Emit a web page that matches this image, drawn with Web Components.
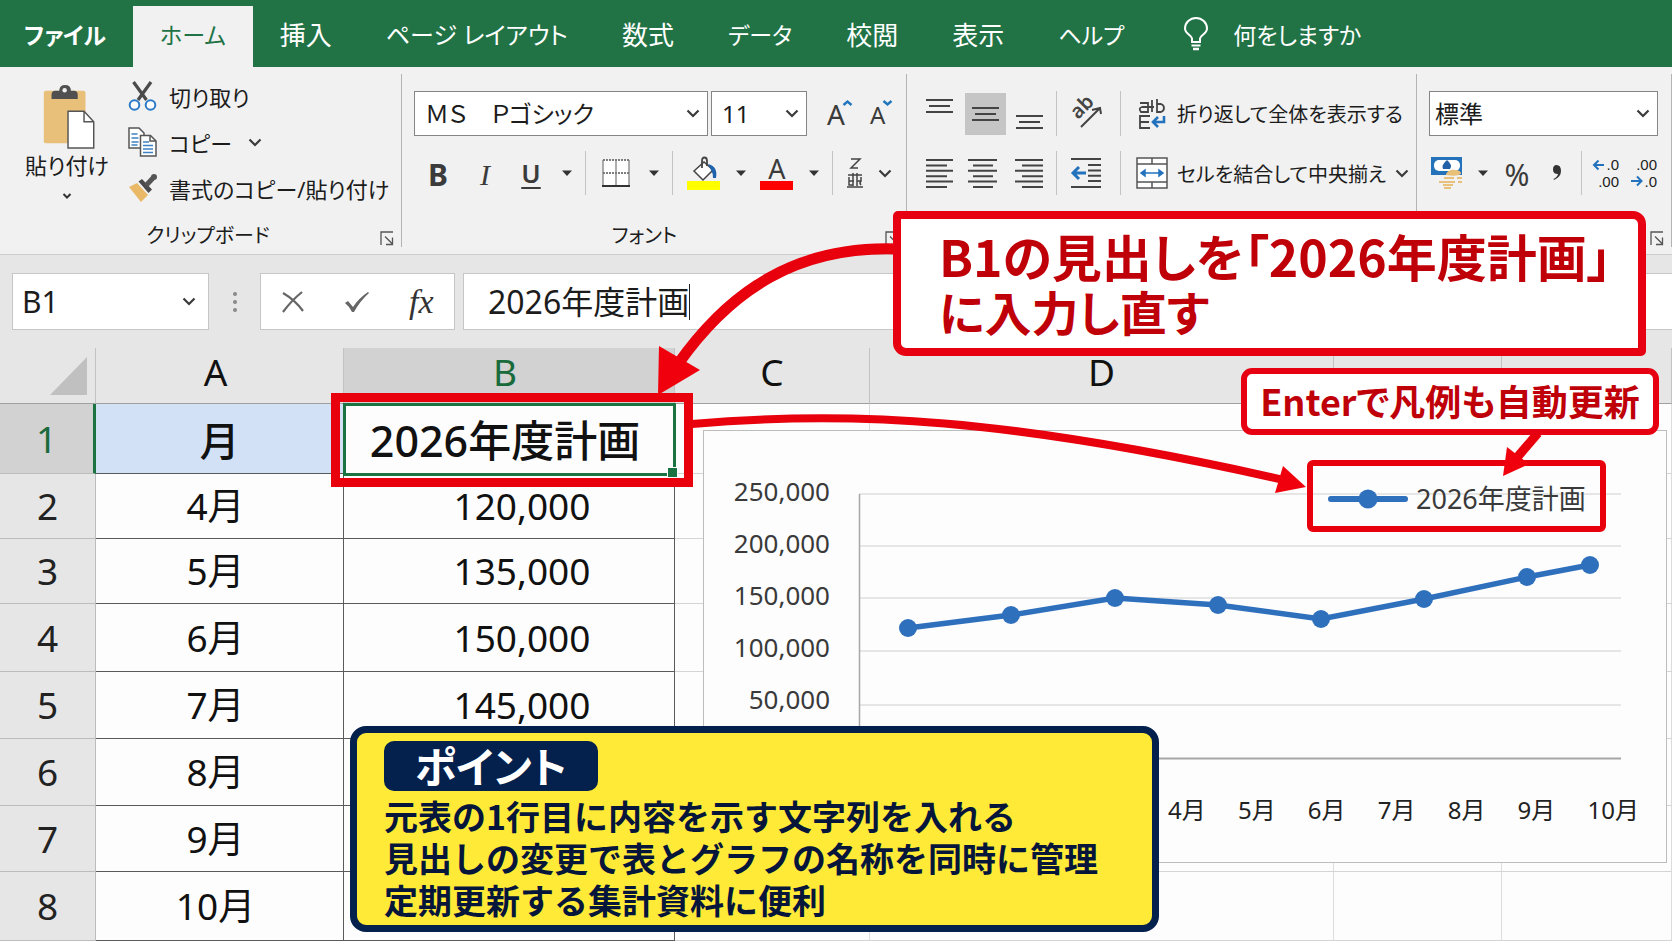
<!DOCTYPE html>
<html lang="ja">
<head>
<meta charset="utf-8">
<title>2026年度計画</title>
<style>
  html, body { margin: 0; height: 100%; }
  body {
    background: #e6e6e6;
    color: #1c1c1c;
    font-family: "Noto Sans", "Noto Sans CJK JP", sans-serif;
    font-feature-settings: "palt";
    overflow: hidden;
  }
</style>
</head>
<body>
<excel-app></excel-app>

<script>
const BASE = `
  *, *::before, *::after { box-sizing: border-box; }
  button, input, select { font: inherit; font-feature-settings: inherit; color: inherit; margin: 0; }
  button { border: 0; background: none; padding: 0; display: flex; align-items: center; justify-content: center; flex: none; white-space: nowrap; }
  svg { display: block; flex: none; overflow: visible; }
`;

function define(name, css, html, setup) {
  const template = document.createElement('template');
  template.innerHTML = `<style>${BASE}${css}</style>${html}`;
  customElements.define(name, class extends HTMLElement {
    constructor() {
      super();
      this.attachShadow({ mode: 'open' }).append(template.content.cloneNode(true));
    }
    connectedCallback() { if (setup) setup(this, this.shadowRoot); }
  });
}

/* ---------- small shared parts ---------- */
define('chevron-icon', `:host { display: block; flex: none; }`,
  `<svg width="14" height="9" viewBox="0 0 14 9" fill="none" stroke="#3a3a3a" stroke-width="2.2"><path d="M1.5 1.5 7 7l5.500-5.500"/></svg>`);

define('drop-arrow', `:host { display: block; flex: none; }
  button { width: 100%; height: 44px; }`,
  `<button type="button" aria-label="その他のオプション"><svg width="10" height="6" viewBox="0 0 10 6"><path d="M0 0.500h10L5 6z" fill="#333"/></svg></button>`);

define('bar-separator', `:host { display: flex; justify-content: center; align-self: stretch; flex: none; }
  i { width: 1px; background: #c4c4c4; }`, `<i></i>`);

define('select-box', `
  :host { display: block; position: relative; height: 45px; }
  select { appearance: none; width: 100%; height: 100%; border: 1px solid #858585; border-radius: 0; background: #fff; padding: 0 30px 0 10px; font-size: 24px; color: #1c1c1c; }
  :host([compact]) select { padding-left: 5px; }
  chevron-icon { position: absolute; right: 8px; top: 18px; pointer-events: none; }`,
  `<select></select><chevron-icon></chevron-icon>`,
  (host, root) => {
    const s = root.querySelector('select');
    s.setAttribute('aria-label', host.getAttribute('label'));
    s.innerHTML = `<option>${host.getAttribute('value')}</option>`;
  });

/* ---------- tab bar ---------- */
define('ribbon-tabs', `
  :host { display: flex; height: 67px; padding: 6px 0 0; background: #217346; color: #fff; font-size: 23px; overflow: hidden; }
  nav { display: flex; flex: none; }
  a { display: flex; align-items: center; padding: 0 27px 6px; color: inherit; text-decoration: none; white-space: nowrap; }
  a:first-child { font-weight: 600; padding-left: 24px; }
  a.kanji { font-size: 26px; }
  a.long { font-size: 24px; }
  a[aria-current] { background: #f1f1f1; color: #217346; }
  button { margin-left: 32px; gap: 24px; padding-bottom: 6px; }`,
  `<nav>
    <a href="#file">ファイル</a><a href="#home" aria-current="page">ホーム</a><a class="kanji" href="#insert">挿入</a>
    <a class="long" href="#layout">ページ レイアウト</a><a class="kanji" href="#formula">数式</a><a href="#data">データ</a>
    <a class="kanji" href="#review">校閲</a><a class="kanji" href="#view">表示</a><a href="#help">ヘルプ</a>
  </nav>
  <button type="button">
    <svg width="26" height="34" viewBox="0 0 26 34" fill="none" stroke="#fff" stroke-width="2">
      <path d="M9 25v-3.500C8.500 18 2 17 2 11.500a11 10.500 0 0 1 22 0C24 17 17.500 18 17 21.500V25z"/><path d="M8.500 28.500h9"/><path d="M10 32h6" stroke-width="2.500"/></svg>
    何をしますか</button>`);

/* ---------- ribbon ---------- */
define('ribbon-group', `
  :host { display: flex; flex-direction: column; position: relative; min-width: 0; padding: 24px 12px 0; height: 187px; }
  :host::after { content: ""; position: absolute; right: 0; top: 7px; bottom: 7px; width: 1px; background: #b4b4b4; }
  .body { flex: 1; min-height: 0; }
  footer { display: flex; align-items: center; height: 40px; font-size: 20px; }
  span { flex: 1; text-align: center; }
  footer button { margin: 8px -4px 0 0; }
  :host([lead]) span { padding-left: 24px; }
  :host(:not([lead])) span { padding-right: 10px; }`,
  `<div class="body"><slot></slot></div>
   <footer><span></span><button type="button" aria-label="詳細設定"><svg width="14" height="15" viewBox="0 0 14 15" fill="none" stroke="#555" stroke-width="1.300"><path d="M1 14V1h12M5 5.500l7 7M12.500 6.500V13.500H6"/></svg></button></footer>`,
  (host, root) => { root.querySelector('span').textContent = host.getAttribute('label'); });

define('clipboard-tools', `
  :host { display: flex; font-size: 22px; margin-top: -8px; }
  .paste { flex-direction: column; width: 110px; line-height: 32px; justify-content: flex-start; align-self: flex-start; }
  .paste svg.clip { margin: 2px 0 0 4px; }
  .paste svg.down { margin-top: 12px; }
  .list { display: flex; flex-direction: column; margin-left: 6px; margin-top: -10px; }
  .list button { justify-content: flex-start; height: 46px; gap: 12px; }
  .list chevron-icon { margin-left: 4px; }`,
  `<button class="paste" type="button">
    <svg class="clip" width="54" height="64" viewBox="0 0 54 66">
      <rect x="1" y="6" width="43" height="54" rx="2" fill="#e9c07a"/>
      <path d="M9 14.500V10q0-4 4-4h4q0-6 6-6t6 6h3q4 0 4 4v4.500z" fill="#505050"/><circle cx="22.500" cy="5.500" r="2.300" fill="#f1f1f1"/>
      <path d="M26 27h16.500L52.500 38v27H26z" fill="#fff" stroke="#555" stroke-width="1.500"/><path d="M42.500 27v11h10" fill="none" stroke="#555" stroke-width="1.500"/></svg>
    貼り付け
    <svg class="down" width="8" height="6" viewBox="0 0 8 6" fill="none" stroke="#333" stroke-width="2"><path d="M.5 1 4 4.500 7.500 1"/></svg>
  </button>
  <div class="list">
    <button type="button"><svg width="29" height="30" viewBox="0 0 29 30">
      <path d="M5.500 1 18.500 19M23 1 10 19" stroke="#4a4a4a" stroke-width="3.200"/><g fill="#fff" stroke="#2b7bc8" stroke-width="2"><circle cx="6.500" cy="24" r="4.800"/><circle cx="22.500" cy="24" r="4.800"/></g></svg>切り取り</button>
    <button type="button"><svg width="29" height="30" viewBox="0 0 29 30" fill="#fff" stroke="#555" stroke-width="1.500">
      <path d="M1 1h10l5 5v15H1z"/><path d="M3.500 7h6M3.500 11h7M3.500 15h7M3.500 18h6" stroke="#3c82c4"/><path d="M12.500 8.500h10L28 14v15H12.500z"/><path d="M22 8.500V14h6" fill="none"/><path d="M15 15h6M15 18.500h10M15 22h10M15 25.500h10" stroke="#3c82c4"/></svg>コピー<chevron-icon></chevron-icon></button>
    <button type="button"><svg width="29" height="30" viewBox="0 0 29 30">
      <path d="M1 14 9 10 20 22 13 29z" fill="#e9b968"/><path d="M10.500 8.500 14 6 24 16.500 20.500 20z" fill="#4a4a4a"/><path d="M18 12.500 25 5" stroke="#555" stroke-width="5"/><circle cx="26" cy="4" r="3" fill="#555"/></svg>書式のコピー/貼り付け</button>
  </div>`);

define('font-tools', `
  :host { display: block; }
  .row { display: flex; align-items: center; height: 45px; }
  .row + .row { margin-top: 15px; height: 44px; }
  .row button { height: 44px; color: #3b3b3b; }
  .family { width: 294px; margin-right: 3px; }
  .size { width: 96px; }
  .w30 { width: 30px; } .w46 { width: 46px; } .w48 { width: 48px; } .w50 { width: 50px; } .w52 { width: 52px; }
  drop-arrow { width: 26px; } drop-arrow.s { width: 21px; }
  bar-separator { width: 11px; } bar-separator.l { width: 16px; }
  .b { font-size: 30px; font-weight: 700; padding-top: 3px; } .i { font: italic 400 30px "Liberation Serif", serif; padding-top: 3px; } .u { font-size: 26px; font-weight: 600; text-decoration: underline; text-underline-offset: 4px; text-decoration-thickness: 2px; }
  .big { font-size: 28px; margin-left: 20px; } .small { font-size: 24px; margin-left: 18px; padding-top: 2px; }
  .big svg, .small svg { align-self: flex-start; margin: 8px 0 0 -2px; } .small svg { margin-top: 6px; }
  text { font-family: "Noto Sans", "Noto Sans CJK JP", sans-serif; }`,
  `<div class="row">
    <select-box class="family" label="フォント" value="ＭＳ　Ｐゴシック"></select-box>
    <select-box class="size" label="フォント サイズ" value="11"></select-box>
    <button class="big" type="button">A<svg width="9" height="6" viewBox="0 0 9 6" fill="none" stroke="#2076bd" stroke-width="2.400"><path d="M.5 5 4.500 1.500 8.500 5"/></svg></button>
    <button class="small" type="button">A<svg width="9" height="6" viewBox="0 0 9 6" fill="none" stroke="#2076bd" stroke-width="2.400"><path d="M.5 1 4.500 4.500 8.500 1"/></svg></button>
  </div>
  <div class="row">
    <button class="b w48" type="button">B</button><button class="i w46" type="button">I</button><button class="u w46" type="button">U</button><drop-arrow></drop-arrow>
    <bar-separator></bar-separator>
    <button class="w50" type="button" aria-label="罫線"><svg width="28" height="28" viewBox="0 0 28 28" fill="none"><path d="M1 1h26v26H1z" fill="#fff"/><path d="M1 1h26M1 14h26" stroke="#555" stroke-width="1.400" stroke-dasharray="2 1"/><path d="M1 1v26M14 1v26M27 1v26" stroke="#777" stroke-width="1.200"/><path d="M0 27h28" stroke="#333" stroke-width="2"/></svg></button><drop-arrow></drop-arrow>
    <bar-separator></bar-separator>
    <button class="w52" type="button" aria-label="塗りつぶしの色"><svg width="34" height="34" viewBox="0 0 34 34"><path d="M7 15 17 6 26 14 16 24z" fill="#fff" stroke="#444" stroke-width="1.500"/><path d="M15 12V5q0-3.500 2.500-3.500T20 5v5" fill="none" stroke="#444" stroke-width="1.800"/><path d="M21 8q10 2 8 14l-3 0q0-5-2-8z" fill="#1f63ad"/><rect y="25" width="33" height="9" fill="#ff0"/></svg></button><drop-arrow class="s"></drop-arrow>
    <button class="w52" type="button" aria-label="フォントの色"><svg width="34" height="34" viewBox="0 0 34 34"><text x="17" y="23" text-anchor="middle" font-size="27" fill="#3b3b3b">A</text><rect y="25" width="33" height="9" fill="#f00"/></svg></button><drop-arrow class="s"></drop-arrow>
    <bar-separator class="l"></bar-separator>
    <button class="w30" type="button" aria-label="ふりがな"><svg width="18" height="32" viewBox="0 0 18 32" fill="none" stroke="#444" stroke-width="1.500"><path d="M5 2h9L7 9l-2 2h7"/><path d="M2 18h14M7 16v13M11 16v13M3 20v4h5M15 20v4h-4M3 24v4h4M15 28q-2-2 0-4M1 30h16"/></svg></button>
    <button class="w30" type="button" aria-label="ふりがなの表示"><chevron-icon></chevron-icon></button>
  </div>`);

define('align-tools', `
  :host { display: block; font-size: 20px; }
  .row { display: flex; align-items: center; height: 45px; }
  .row + .row { margin-top: 15px; height: 44px; }
  .row button { height: 42px; }
  .w41 { width: 41px; } .w46 { width: 46px; } .w50 { width: 50px; }
  .on { background: #c5c5c5; margin-left: 5px; }
  .top svg { margin-bottom: 16px; } .bottom svg { margin-top: 16px; }
  bar-separator { width: 9px; } bar-separator.l { width: 18px; }
  .text { gap: 9px; padding-left: 7px; }
  text { font-family: "Noto Sans", sans-serif; }`,
  `<div class="row">
    <button class="w41 top" type="button" aria-label="上揃え"><svg width="27" height="14" viewBox="0 0 27 14" stroke="#444" stroke-width="2"><path d="M0 1h27M3 7h21M0 13h27"/></svg></button>
    <button class="w41 on" type="button" aria-label="上下中央揃え" aria-pressed="true"><svg width="27" height="14" viewBox="0 0 27 14" stroke="#444" stroke-width="2"><path d="M0 1h27M3 7h21M0 13h27"/></svg></button>
    <button class="w46 bottom" type="button" aria-label="下揃え"><svg width="27" height="14" viewBox="0 0 27 14" stroke="#444" stroke-width="2"><path d="M0 1h27M3 7h21M0 13h27"/></svg></button>
    <bar-separator></bar-separator>
    <button class="w50" type="button" aria-label="方向"><svg width="34" height="32" viewBox="0 0 34 32"><text transform="translate(9 22) rotate(-45)" font-size="20" fill="#444" font-weight="600">ab</text><path d="M12 29 30 11M23 12l8-2 1 6" fill="none" stroke="#444" stroke-width="2"/></svg></button>
    <bar-separator class="l"></bar-separator>
    <button class="text" type="button"><svg width="32" height="32" viewBox="0 0 32 32" fill="none" stroke="#444" stroke-width="1.800"><path d="M4 5h8v9H5q-3-4 1-5h12M16 2v12M21 1v13h4q3-1 3-4t-3-4h-4M14 18H4v12h10M4 24h9"/><path d="M28 18v6H18M22 19l-5 5 5 5" stroke="#2272bd" stroke-width="2.600"/></svg>折り返して全体を表示する</button>
  </div>
  <div class="row">
    <button class="w41" type="button" aria-label="左揃え"><svg width="28" height="29" viewBox="0 0 28 29" stroke="#444" stroke-width="2"><path d="M0 1h27M0 6.400h21M0 11.800h27M0 17.200h21M0 22.600h27M0 28h21"/></svg></button>
    <button class="w46" type="button" aria-label="中央揃え"><svg width="30" height="29" viewBox="0 0 30 29" stroke="#444" stroke-width="2"><path d="M0 1h29M5 6.400h20M0 11.800h29M5 17.200h20M0 22.600h29M5 28h20"/></svg></button>
    <button class="w46" type="button" aria-label="右揃え"><svg width="28" height="29" viewBox="0 0 28 29" stroke="#444" stroke-width="2"><path d="M0 1h28M7 6.400h21M0 11.800h28M7 17.200h21M0 22.600h28M7 28h21"/></svg></button>
    <bar-separator></bar-separator>
    <button class="w50" type="button" aria-label="インデントを減らす"><svg width="30" height="30" viewBox="0 0 30 30" fill="none" stroke="#444" stroke-width="2"><path d="M0 1h30M17 7h13M17 12.400h13M17 17.800h13M17 23h13M0 29h30"/><path d="M15 15H2M8 9l-6 6 6 6" stroke="#2272bd" stroke-width="3"/></svg></button>
    <bar-separator class="l"></bar-separator>
    <button class="text" type="button"><svg width="32" height="32" viewBox="0 0 32 32" fill="#fff" stroke="#555" stroke-width="1.500"><path d="M1 1h30v30H1zM1 7h30M1 25h30M16 1v6M16 25v6"/><path d="M6 16h20M9 13l-4 3 4 3zM23 13l4 3-4 3z" fill="#2272bd" stroke="#2272bd"/></svg>セルを結合して中央揃え<chevron-icon></chevron-icon></button>
  </div>`);

define('number-tools', `
  :host { display: block; }
  .row { display: flex; align-items: center; height: 44px; margin-top: 15px; }
  button { height: 44px; color: #3b3b3b; }
  select-box { width: 229px; }
  drop-arrow { width: 36px; }
  .w36 { width: 36px; } .w32 { width: 32px; } .w48 { width: 48px; }
  .pct { font-size: 30px; padding-top: 3px; }
  text { font-family: "Liberation Sans", sans-serif; font-size: 15px; fill: #222; }`,
  `<select-box compact label="表示形式" value="標準"></select-box>
  <div class="row">
    <button class="w36" type="button" aria-label="通貨表示形式"><svg width="32" height="32" viewBox="0 0 32 32"><path d="M0 0h31v18H0z" fill="#2473ba"/><rect x="3" y="3" width="26" height="11" rx="5" fill="#fff"/><path d="M16 3q6 5 3 9h-7q-2-4 4-9z" fill="#2261a5"/><path d="M15 17q3-5 9-4 6 0 6 4-4 3-15 1z" fill="#e9c07a"/><path d="M13 21h10M26 21h5M8 25h16M27 25h4M12 28h10M13 31h7" stroke="#e9c07a" stroke-width="2"/></svg></button><drop-arrow></drop-arrow>
    <button class="w32 pct" type="button">%</button>
    <button class="w48" type="button" aria-label="桁区切りスタイル"><svg width="11" height="16" viewBox="0 0 11 16"><path d="M4.500 0Q9 0 9 6q0 6-7 9L1.500 14q4-2 4.500-5-5 0-5-4.500Q1 0 4.500 0z" fill="#333"/></svg></button>
    <bar-separator></bar-separator>
    <button class="w48" type="button" aria-label="小数点以下の表示桁数を増やす"><svg width="28" height="32" viewBox="0 0 28 32"><path d="M12 8H2M6.500 3.500 2 8l4.500 4.500" fill="none" stroke="#2272bd" stroke-width="2"/><text x="27" y="13" text-anchor="end">.0</text><text x="27" y="30" text-anchor="end">.00</text></svg></button>
    <button type="button" aria-label="小数点以下の表示桁数を減らす"><svg width="28" height="32" viewBox="0 0 28 32"><text x="27" y="13" text-anchor="end">.00</text><path d="M1 24h10M7 19.500l4.500 4.500L7 28.500" fill="none" stroke="#2272bd" stroke-width="2"/><text x="27" y="30" text-anchor="end">.0</text></svg></button>
  </div>`);

define('excel-ribbon', `
  :host { display: grid; grid-template-columns: 402fr 505fr 510fr 255fr; background: #f1f1f1; border-bottom: 1px solid #cdcdcd; }`,
  `<ribbon-group lead label="クリップボード"><clipboard-tools></clipboard-tools></ribbon-group>
   <ribbon-group label="フォント"><font-tools></font-tools></ribbon-group>
   <ribbon-group label=""><align-tools></align-tools></ribbon-group>
   <ribbon-group label=""><number-tools></number-tools></ribbon-group>`);

/* ---------- formula bar ---------- */
define('formula-bar', `
  :host { display: flex; height: 93px; padding: 18px 0 18px 12px; background: #e6e6e6; font-size: 30px; }
  .box { display: flex; align-items: center; background: #fff; border: 1px solid #c6c6c6; height: 57px; }
  .name { width: 197px; padding-right: 12px; }
  input { border: 0; background: none; outline: 0; width: 100%; min-width: 0; height: 100%; padding: 0 0 0 9px; }
  .dots { width: 51px; display: flex; align-items: center; justify-content: center; }
  .fn { width: 195px; margin-right: 8px; justify-content: space-around; padding: 0 1px; }
  .entry { flex: 1; padding-left: 15px; border-right: 0; position: relative; }
  .entry input { font-size: 32px; padding-bottom: 4px; }
  .entry i { position: absolute; left: 225px; top: 10px; width: 1px; height: 36px; background: #222; }
  .fx { font: italic 34px "Liberation Serif", serif; color: #333; }`,
  `<div class="box name"><input type="text" value="B1" aria-label="名前ボックス"><chevron-icon></chevron-icon></div>
   <div class="dots"><svg width="4" height="20" viewBox="0 0 4 20" fill="#888"><circle cx="2" cy="2" r="2"/><circle cx="2" cy="10" r="2"/><circle cx="2" cy="18" r="2"/></svg></div>
   <div class="box fn">
     <button type="button" aria-label="キャンセル"><svg width="24" height="22" viewBox="0 0 24 22" fill="none" stroke="#666" stroke-width="2.200"><path d="M2 2q12 7 20 18M21 1Q10 10 2 21"/></svg></button>
     <button type="button" aria-label="入力"><svg width="26" height="22" viewBox="0 0 26 22" fill="#666"><path d="M1 12l3-2 5 6Q15 7 24 1l1 1Q16 10 10 21H8Q5 15 1 12z"/></svg></button>
     <button class="fx" type="button" aria-label="関数の挿入">fx</button>
   </div>
   <div class="box entry"><input type="text" value="2026年度計画" aria-label="数式バー"><i></i></div>`);

/* ---------- sheet ---------- */
define('sheet-grid', `
  :host { display: block; }
  table { border-collapse: separate; border-spacing: 0; table-layout: fixed; width: 100%; font-size: 37px; line-height: 40px; color: #111; }
  th, td { padding: 0; text-align: center; font-weight: 400; border-right: 1px solid #dcdcdc; border-bottom: 1px solid #d4d4d4; }
  td { background: #fdfdfd; }
  thead th { background: #e6e6e6; border-right-color: #c2c2c2; border-bottom-color: #a0a0a0; padding: 0 0 8px; }
  thead th:nth-child(2), thead th:nth-child(3) { padding-right: 8px; }
  thead th:first-child { padding: 0; }
  tbody th { background: #e6e6e6; border-color: #bcbcbc; color: #222; }
  thead th:first-child svg { margin: 0 0 0 50px; }
  .sel { background: #d2d2d2; color: #1a6b3c; }
  thead th.sel { background: #d2d2d2; }
  tbody th.sel { background: #d2d2d2; color: #1a6b3c; border-right: 3px solid #1a7340; }
  td.data { border-color: #5a5a5a; }
  td.month { padding-right: 8px; }
  td.num { padding-left: 26px; }
  td.head { background: #d2e1f6; font-size: 40px; padding: 4px 0 0; font-weight: 500; }
  td.title { font-size: 43px; padding: 4px 8px 0 0; font-weight: 500; }
  col.rh { width: 96px; } col.a { width: 248px; } col.b { width: 331px; } col.c { width: 195px; } col.d { width: 464px; } col.e { width: 168px; }`,
  `<table><colgroup><col class="rh"><col class="a"><col class="b"><col class="c"><col class="d"><col class="e"><col></colgroup>
    <thead><tr style="height:56px"><th aria-label="すべて選択"><svg width="37" height="38" viewBox="0 0 37 38"><path d="M37 0v38H0z" fill="#c0c0c0"/></svg></th><th>A</th><th class="sel">B</th><th>C</th><th>D</th><th></th><th></th></tr></thead>
    <tbody></tbody></table>`,
  (host, root) => {
    const rows = [
      [70, '月', '2026年度計画'], [65, '4月', '120,000'], [65, '5月', '135,000'], [68, '6月', '150,000'],
      [67, '7月', '145,000'], [67, '8月', ''], [66, '9月', ''], [69, '10月', '']
    ];
    root.querySelector('tbody').innerHTML = rows.map(([h, a, b], i) => `
      <tr style="height:${h}px"><th class="${i ? '' : 'sel'}">${i + 1}</th>
      <td class="data month ${i ? '' : 'head'}">${a}</td><td class="data ${i ? 'num' : 'title'}">${b}</td>
      <td></td><td></td><td></td><td></td></tr>`).join('');
  });

/* ---------- chart ---------- */
define('line-chart', `
  :host { display: grid; grid-template-columns: 126px 1fr; grid-template-rows: 300px 1fr; column-gap: 28px; background: #fdfdfd; border: 1px solid #bdbdbd; padding: 46px 27px 0 0; color: #3a3a3a; }
  ol { list-style: none; margin: 0; padding: 0; }
  .y { display: flex; flex-direction: column; font-size: 26px; line-height: 52px; text-align: right; margin-top: -12px; }
  .x { grid-column: 2; display: flex; justify-content: space-between; font-size: 24px; line-height: 32px; margin: 17px 0 0 310px; color: #222; }
  .plot { padding-top: 1px; }
  figcaption { position: absolute; display: flex; align-items: center; gap: 8px; left: 624px; top: 50px; font-size: 27px; line-height: 36px; }`,
  `<ol class="y"><li>250,000</li><li>200,000</li><li>150,000</li><li>100,000</li><li>50,000</li></ol>
   <div class="plot"><svg width="764" height="285" viewBox="858 478 764 285" fill="none">
     <path d="M859 494h762M859 546h762M859 598h762M859 651h762M859 705h762" stroke="#dedede" stroke-width="1.500"/>
     <path d="M859.500 494v265" stroke="#a8a8a8" stroke-width="1.500"/><path d="M859 758.500h762" stroke="#a6a6a6" stroke-width="2"/>
     <g class="series"></g></svg></div>
   <ol class="x"><li>4月</li><li>5月</li><li>6月</li><li>7月</li><li>8月</li><li>9月</li><li>10月</li></ol>
   <figcaption><svg width="80" height="20" viewBox="0 0 80 20"><path d="M3 10h74" stroke="#2f70bd" stroke-width="6" stroke-linecap="round"/><circle cx="40" cy="10" r="9.500" fill="#2f70bd"/></svg>2026年度計画</figcaption>`,
  (host, root) => {
    const pts = [[908, 628], [1011, 615], [1115, 598], [1218, 605], [1321, 619], [1424, 599], [1527, 577], [1590, 565]];
    root.querySelector('.series').innerHTML =
      `<polyline points="${pts.join(' ')}" stroke="#2f70bd" stroke-width="5.500"/>` +
      pts.map(([x, y]) => `<circle cx="${x}" cy="${y}" r="9" fill="#2f70bd"/>`).join('');
  });

/* ---------- annotations ---------- */
define('call-out', `
  :host { display: block; background: #fff; border: 6px solid #e60012; border-radius: 11px; color: #c00009; font-family: "Noto Sans CJK JP", sans-serif; font-weight: 700; white-space: nowrap; }`,
  `<slot></slot>`);

define('point-note', `
  :host { display: block; background: #ffea38; border: 7px solid #04204c; border-radius: 16px; padding: 8px 27px 0; color: #06163a; font-family: "Noto Sans CJK JP", sans-serif; font-weight: 700; }
  h2 { margin: 0 0 4px; width: 214px; height: 50px; border-radius: 10px; background: #04204c; color: #fff; font-size: 42px; line-height: 48px; text-align: center; }
  p { margin: 0; font-size: 34px; line-height: 42px; white-space: nowrap; font-feature-settings: normal; }`,
  `<h2><slot name="title"></slot></h2><p><slot></slot></p>`);

define('annotation-layer', `
  :host { position: absolute; inset: 0; pointer-events: none; overflow: hidden; }
  :host > * { position: absolute; }
  .cell { left: 343px; top: 403px; width: 333px; height: 73px; border: 3px solid #1a7340; }
  .cell::after { content: ""; position: absolute; right: -5px; bottom: -5px; width: 11px; height: 11px; background: #1a7340; border: 1px solid #fff; }
  .frame { left: 331px; top: 393px; width: 362px; height: 94px; border: 9px solid #e8000d; }
  .legend { left: 1307px; top: 460px; width: 299px; height: 72px; border: 6px solid #e8000d; border-radius: 6px; }
  svg { left: 0; top: 0; }
  .main { left: 893px; top: 211px; width: 753px; height: 145px; border-width: 8px; border-radius: 5px 13px; padding: 8px 0 0 38px; font-size: 47px; line-height: 56px; }
  .main div { height: 56px; }
  .main .first { font-size: 50px; }
  .sub { left: 1241px; top: 368px; width: 418px; height: 67px; text-align: center; font-size: 36px; line-height: 52px; }
  point-note { left: 350px; top: 726px; width: 809px; height: 206px; }`,
  `<div class="cell"></div><div class="frame"></div><div class="legend"></div>
   <svg width="1672" height="941" viewBox="0 0 1672 941" fill="none" stroke="#e8000d">
     <path d="M896 249C798 246 731 289 678 364" stroke-width="11"/><path d="M659 346 700 370 658 395z" fill="#f0000d" stroke="none"/>
     <path d="M692 424C850 410 1010 418 1284 480" stroke-width="8"/><path d="M1283 466 1275 493 1306 487z" fill="#f0000d" stroke="none"/>
     <path d="M1538 433 1514 461" stroke-width="9"/><path d="M1507 447 1529 464 1503 476z" fill="#f0000d" stroke="none"/></svg>
   <call-out class="main"><div class="first">B1の見出しを「2026年度計画」</div><div>に入力し直す</div></call-out>
   <call-out class="sub">Enterで凡例も自動更新</call-out>
   <point-note><span slot="title">ポイント</span>元表の1行目に内容を示す文字列を入れる<br>見出しの変更で表とグラフの名称を同時に管理<br>定期更新する集計資料に便利</point-note>`);

define('excel-app', `
  :host { display: block; position: relative; min-height: 100vh; overflow: hidden; }
  main { position: relative; }
  line-chart { position: absolute; left: 703px; top: 82px; width: 964px; height: 433px; }`,
  `<ribbon-tabs></ribbon-tabs><excel-ribbon></excel-ribbon><formula-bar></formula-bar>
   <main><sheet-grid></sheet-grid><line-chart></line-chart></main>
   <annotation-layer></annotation-layer>`);
</script>
</body>
</html>
